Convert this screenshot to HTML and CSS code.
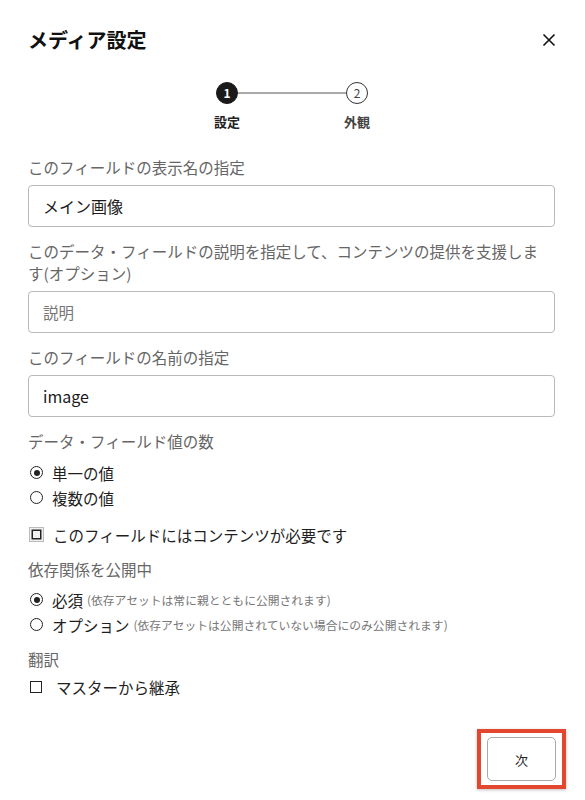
FILE: index.html
```html
<!DOCTYPE html>
<html lang="ja">
<head>
    <meta charset="UTF-8">
    <meta name="viewport" content="width=device-width, initial-scale=1.0">
    <title>メディア設定</title>
    <link rel="stylesheet" href="styles.css">
</head>
<body>
    <div class="dialog">
        <div class="dialog-header">
            <h1>メディア設定</h1>
            <button class="close-button" aria-label="閉じる">
                <svg width="14" height="14" viewBox="0 0 14 14">
                    <path d="M1.5 1.5L12.5 12.5M12.5 1.5L1.5 12.5" stroke="#111" stroke-width="1.6" fill="none"/>
                </svg>
            </button>
        </div>

        <div class="stepper">
            <div class="step active">
                <span class="step-dot">1</span>
                <span class="step-label">設定</span>
            </div>
            <div class="step-line"></div>
            <div class="step">
                <span class="step-dot">2</span>
                <span class="step-label">外観</span>
            </div>
        </div>

        <div class="field">
            <label class="field-label">このフィールドの表示名の指定</label>
            <div class="text-input">メイン画像</div>
        </div>

        <div class="field">
            <label class="field-label narrow">このデータ・フィールドの説明を指定して、コンテンツの提供を支援します(オプション)</label>
            <div class="text-input placeholder">説明</div>
        </div>

        <div class="field">
            <label class="field-label">このフィールドの名前の指定</label>
            <div class="text-input">image</div>
        </div>

        <div class="field">
            <label class="field-label">データ・フィールド値の数</label>
            <div class="options first">
                <div class="option"><span class="radio checked"></span>単一の値</div>
                <div class="option"><span class="radio"></span>複数の値</div>
            </div>
        </div>

        <div class="option check-row required">
            <span class="checkbox focused"></span>このフィールドにはコンテンツが必要です
        </div>

        <div class="field publish">
            <label class="field-label">依存関係を公開中</label>
            <div class="options">
                <div class="option"><span class="radio checked"></span>必須<span class="hint">(依存アセットは常に親とともに公開されます)</span></div>
                <div class="option"><span class="radio"></span>オプション<span class="hint">(依存アセットは公開されていない場合にのみ公開されます)</span></div>
            </div>
        </div>

        <div class="field translate">
            <label class="field-label">翻訳</label>
            <div class="option check-row inherit">
                <span class="checkbox"></span>マスターから継承
            </div>
        </div>

        <div class="dialog-footer">
            <div class="highlight">
                <button class="next-button">次</button>
            </div>
        </div>
    </div>
</body>
</html>
```

FILE: styles.css
```css
body {
    margin: 0;
    background: #fff;
    font-family: "Noto Sans CJK JP", "Noto Sans", sans-serif;
    color: #222;
}
.dialog {
    width: 585px;
    height: 800px;
    box-sizing: border-box;
    padding: 26px 30px 0 28px;
    display: flex;
    flex-direction: column;
}
.dialog-header {
    display: flex;
    justify-content: space-between;
    align-items: center;
    height: 28px;
}
.dialog-header h1 {
    margin: 0;
    font-size: 20px;
    font-weight: 700;
    line-height: 28px;
    color: #111;
}
.close-button {
    border: none;
    background: none;
    padding: 0;
    margin-right: -1px;
    width: 14px;
    height: 14px;
    display: flex;
}
.stepper {
    display: flex;
    justify-content: center;
    align-items: flex-start;
    margin-top: 28px;
    margin-left: 1px;
}
.step {
    display: flex;
    flex-direction: column;
    align-items: center;
    width: 22px;
}
.step-dot {
    width: 22px;
    height: 22px;
    box-sizing: border-box;
    border-radius: 50%;
    border: 1.5px solid #333;
    display: flex;
    align-items: center;
    justify-content: center;
    font-size: 12px;
    line-height: 1;
    color: #444;
}
.step.active .step-dot {
    background: #1a1a1a;
    border-color: #1a1a1a;
    color: #fff;
    font-weight: 700;
}
.step-label {
    margin-top: 9px;
    font-size: 13px;
    font-weight: 700;
    line-height: 18px;
    white-space: nowrap;
    color: #444;
}
.step.active .step-label {
    color: #222;
}
.step-line {
    width: 108px;
    height: 2px;
    background: #aaa;
    margin-top: 10px;
}
.field {
    display: flex;
    flex-direction: column;
    margin-top: 13px;
}
.stepper + .field {
    margin-top: 25px;
}
.field-label {
    font-size: 15.5px;
    line-height: 22px;
    color: #666;
}
.field-label.narrow {
    padding-right: 12px;
}
.text-input {
    margin-top: 7px;
    height: 42px;
    box-sizing: border-box;
    border: 1px solid #b9b9b9;
    border-radius: 4px;
    padding: 0 14px;
    display: flex;
    align-items: center;
    font-size: 16px;
    color: #1a1a1a;
}
.text-input.placeholder {
    color: #777;
    font-size: 15.5px;
}
.options {
    display: flex;
    flex-direction: column;
    margin-top: 8px;
}
.publish .options {
    margin-top: 7px;
}
.option {
    display: flex;
    align-items: center;
    height: 25px;
    font-size: 15.5px;
    color: #1f1f1f;
}
.radio {
    width: 13px;
    height: 13px;
    box-sizing: border-box;
    border: 1.5px solid #222;
    border-radius: 50%;
    margin: 0 9px 0 2px;
    display: flex;
    align-items: center;
    justify-content: center;
}
.radio.checked::after {
    content: "";
    width: 6px;
    height: 6px;
    border-radius: 50%;
    background: #222;
}
.hint {
    font-size: 11.8px;
    color: #777;
    margin-left: 4px;
}
.check-row.required {
    margin-top: 12px;
}
.publish {
    margin-top: 11px;
}
.translate {
    margin-top: 11px;
}
.check-row.inherit {
    margin-top: 4px;
}
.checkbox {
    width: 12px;
    height: 12px;
    box-sizing: border-box;
    border: 1.5px solid #222;
    margin: 0 14px 0 2px;
}
.checkbox.focused {
    width: 15px;
    height: 15px;
    margin: 0 9px 0 1px;
    border: 1px solid #bbb;
    background: #f0f0f0;
    box-shadow: inset 0 0 0 1.5px #f0f0f0, inset 0 0 0 3px #222;
}
.dialog-footer {
    margin-top: auto;
    display: flex;
    justify-content: flex-end;
    padding-bottom: 11px;
    margin-right: -11px;
}
.highlight {
    border: 4px solid #e4472f;
    padding: 4px 6px 4px 6px;
    box-shadow: 0 1px 3px rgba(0, 0, 0, 0.25);
}
.next-button {
    width: 69px;
    height: 44px;
    border: 1px solid #a8a8a8;
    border-radius: 5px;
    background: #fff;
    font-family: "Noto Sans CJK JP", sans-serif;
    font-size: 13px;
    color: #222;
    padding: 0;
    display: block;
}
```
